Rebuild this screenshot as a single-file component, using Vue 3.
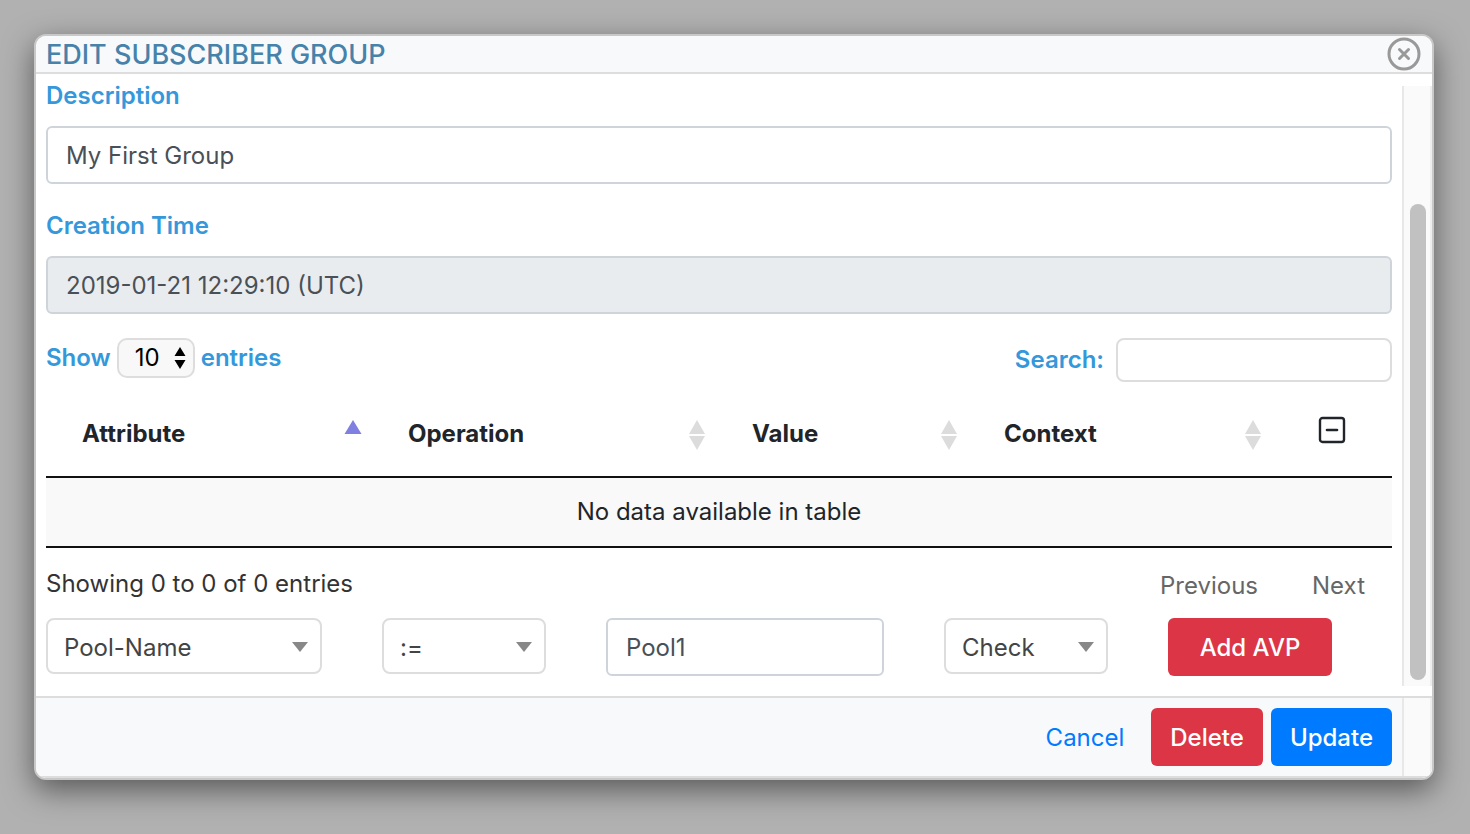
<script setup>
import { ref } from 'vue'

const description = ref('My First Group')
const created = ref('2019-01-21 12:29:10 (UTC)')
const pageSize = ref('10')
const search = ref('')
const columns = ref([
  { name: 'Attribute', width: 'w-attribute', sort: 'asc' },
  { name: 'Operation', width: 'w-operation', sort: 'none' },
  { name: 'Value', width: 'w-value', sort: 'none' },
  { name: 'Context', width: 'w-context', sort: 'none' },
])
const attribute = ref('Pool-Name')
const operation = ref(':=')
const value = ref('Pool1')
const context = ref('Check')
</script>

<template>
  <main class="page">
    <section class="dialog" role="dialog" aria-labelledby="dialog-title">
      <header class="head">
        <h1 id="dialog-title">EDIT SUBSCRIBER GROUP</h1>
        <button class="close" type="button" aria-label="Close">
          <svg viewBox="0 0 34 34" width="34" height="34">
            <circle cx="17" cy="17" r="15" fill="none" stroke="#999" stroke-width="3" />
            <path d="M12.5 12.5 L21.5 21.5 M21.5 12.5 L12.5 21.5" stroke="#999" stroke-width="3" stroke-linecap="round" />
          </svg>
        </button>
      </header>

      <div class="body">
        <div class="content">
          <div class="field">
            <label for="description">Description</label>
            <input id="description" v-model="description" class="control" type="text" />
          </div>
          <div class="field">
            <label for="created">Creation Time</label>
            <input id="created" :value="created" class="control" type="text" readonly />
          </div>

          <div class="tools">
            <label class="length">
              Show
              <span class="length-box">
                <select v-model="pageSize">
                  <option>10</option>
                  <option>25</option>
                  <option>50</option>
                </select>
                <svg viewBox="0 0 12 22" width="12" height="22" aria-hidden="true">
                  <path d="M6 0 L11.5 9 H0.5 Z M0.5 13 H11.5 L6 22 Z" fill="#000" />
                </svg>
              </span>
              entries
            </label>
            <label class="search">
              Search:
              <input v-model="search" type="search" />
            </label>
          </div>

          <table class="grid">
            <thead>
              <tr>
                <th v-for="c in columns" :key="c.name" :class="c.width" scope="col">
                  <div class="th">
                    {{ c.name }}
                    <svg viewBox="0 0 18 32" width="18" height="32" aria-hidden="true">
                      <path v-if="c.sort === 'asc'" d="M9 2 L17.5 16 H0.5 Z" fill="#7f80e0" />
                      <path v-else d="M9 2 L17 16 H1 Z M1 18 H17 L9 32 Z" fill="#dcdcdc" />
                    </svg>
                  </div>
                </th>
                <th class="w-remove" scope="col">
                  <button class="remove" type="button" aria-label="Remove">
                    <svg viewBox="0 0 28 28" width="28" height="28">
                      <rect x="2" y="2" width="24" height="24" rx="2.5" fill="none" stroke="#212529" stroke-width="2.4" />
                      <path d="M9 14 H19" stroke="#212529" stroke-width="2.6" stroke-linecap="round" />
                    </svg>
                  </button>
                </th>
              </tr>
            </thead>
            <tbody>
              <tr>
                <td colspan="5">No data available in table</td>
              </tr>
            </tbody>
          </table>

          <div class="summary">
            <span>Showing 0 to 0 of 0 entries</span>
            <nav class="pager" aria-label="Pages">
              <button type="button" disabled>Previous</button>
              <button type="button" disabled>Next</button>
            </nav>
          </div>

          <form class="avp" @submit.prevent>
            <span class="pick">
              <select v-model="attribute" aria-label="Attribute"><option>Pool-Name</option></select>
            </span>
            <span class="pick">
              <select v-model="operation" aria-label="Operation"><option>:=</option></select>
            </span>
            <input v-model="value" class="control" type="text" aria-label="Value" />
            <span class="pick">
              <select v-model="context" aria-label="Context"><option>Check</option></select>
            </span>
            <button class="btn danger" type="submit">Add AVP</button>
          </form>
        </div>
        <div class="track" aria-hidden="true"><div class="thumb"></div></div>
      </div>

      <footer class="foot">
        <div class="actions">
          <button class="btn link" type="button">Cancel</button>
          <button class="btn danger" type="button">Delete</button>
          <button class="btn primary" type="button">Update</button>
        </div>
        <div class="gutter" aria-hidden="true"></div>
      </footer>
    </section>
  </main>
</template>

<style>
body {
  margin: 0;
  background: #b1b1b1;
}
</style>

<style scoped>
* {
  box-sizing: border-box;
}
.page {
  padding: 34px 36px 54px 34px;
  font-family: Inter, "Liberation Sans", sans-serif;
  font-size: 24px;
  line-height: 36px;
  color: #212529;
}
button,
input,
select {
  font: inherit;
  color: inherit;
  margin: 0;
}
button {
  padding: 0;
  border: 0;
  background: none;
  cursor: pointer;
}
svg {
  display: block;
}
.dialog {
  border: 2px solid #c8c8c8;
  border-radius: 12px;
  background: #fff;
  overflow: hidden;
  box-shadow: 0 10px 30px rgba(0, 0, 0, 0.5);
}
.head {
  display: flex;
  align-items: center;
  justify-content: space-between;
  height: 38px;
  padding: 0 11px 0 10px;
  background: #f8f9fb;
  border-bottom: 2px solid #ddd;
}
h1 {
  margin: 0;
  padding-top: 2px;
  font-size: 27px;
  line-height: 34px;
  font-weight: 500;
  color: #4682a9;
}
.body {
  display: flex;
}
.content {
  flex: 1;
  min-width: 0;
  padding: 4px 10px 20px;
}
.track {
  width: 30px;
  margin: 12px 0 10px;
  padding: 118px 4px 6px 6px;
  background: #fafafa;
  border-left: 2px solid #e8e8e8;
  border-right: 2px solid #ededed;
}
.thumb {
  width: 16px;
  height: 100%;
  border-radius: 8px;
  background: #c1c1c1;
}
label {
  color: #3498db;
  font-weight: 600;
}
.field {
  margin-bottom: 24px;
}
.field label {
  display: block;
  margin-bottom: 12px;
}
.control {
  display: block;
  width: 100%;
  min-width: 0;
  height: 58px;
  padding: 0 18px;
  border: 2px solid #ced4da;
  border-radius: 6px;
  background: #fff;
  color: #495057;
}
.control[readonly] {
  background: #e9ecef;
}
.tools {
  display: flex;
  justify-content: space-between;
  align-items: flex-start;
}
.length {
  display: flex;
  align-items: center;
  gap: 6px;
}
.length-box {
  position: relative;
  font-weight: 400;
}
.length-box select {
  display: block;
  width: 78px;
  height: 40px;
  padding: 0 0 0 16px;
  appearance: none;
  border: 2px solid #ddd;
  border-radius: 10px;
  background: #f8f8f8;
  color: #000;
}
.length-box svg {
  position: absolute;
  right: 9px;
  top: 9px;
  pointer-events: none;
}
.search {
  display: flex;
  align-items: center;
  gap: 12px;
}
.search input {
  width: 276px;
  height: 44px;
  padding: 0 10px;
  border: 2px solid #ddd;
  border-radius: 8px;
  background: #fff;
}
.grid {
  width: 100%;
  margin-top: 12px;
  table-layout: fixed;
  border-collapse: separate;
  border-spacing: 0;
  border-bottom: 2px solid #111;
}
th {
  height: 84px;
  padding: 0 10px 2px 36px;
  text-align: left;
  font-weight: 700;
  border-bottom: 2px solid #111;
}
.th {
  display: flex;
  align-items: center;
  justify-content: space-between;
}
.w-attribute { width: 326px; }
.w-operation { width: 344px; }
.w-value { width: 252px; }
.w-context { width: 304px; }
.w-remove {
  width: 120px;
  padding: 0 0 10px;
}
.remove {
  display: block;
  margin: 0 auto;
}
td {
  height: 68px;
  padding: 0;
  text-align: center;
  background: #f9f9f9;
}
.summary {
  display: flex;
  justify-content: space-between;
  padding: 18px 0 14px;
  color: #333;
}
.pager {
  display: flex;
  padding-top: 2px;
}
.pager button {
  padding: 0 27px;
  color: #666;
}
.avp {
  display: grid;
  grid-template-columns: 276fr 164fr 278fr 164fr 164fr;
  gap: 60px;
  padding-right: 60px;
}
.pick {
  position: relative;
  height: 56px;
}
.pick select {
  display: block;
  width: 100%;
  height: 56px;
  padding: 4px 40px 0 16px;
  appearance: none;
  border: 2px solid #ddd;
  border-radius: 8px;
  background: #fff;
  color: #444;
}
.pick::after {
  content: "";
  position: absolute;
  right: 14px;
  top: 24px;
  border: 8px solid transparent;
  border-top: 10px solid #888;
  border-bottom: 0;
  pointer-events: none;
}
.btn {
  height: 58px;
  padding: 2px 19px 0;
  border-radius: 6px;
  font-weight: 500;
  color: #fff;
}
.danger {
  background: #dc3545;
}
.primary {
  background: #007bff;
}
.link {
  color: #007bff;
  font-weight: 400;
}
.foot {
  display: flex;
  background: #f8f9fb;
  border-top: 2px solid #ddd;
  border-bottom: 2px solid #ddd;
}
.actions {
  display: flex;
  flex: 1;
  justify-content: flex-end;
  gap: 8px;
  padding: 10px;
}
.gutter {
  width: 30px;
  background: #fafafa;
  border-left: 2px solid #e8e8e8;
  border-right: 2px solid #ededed;
}
</style>
